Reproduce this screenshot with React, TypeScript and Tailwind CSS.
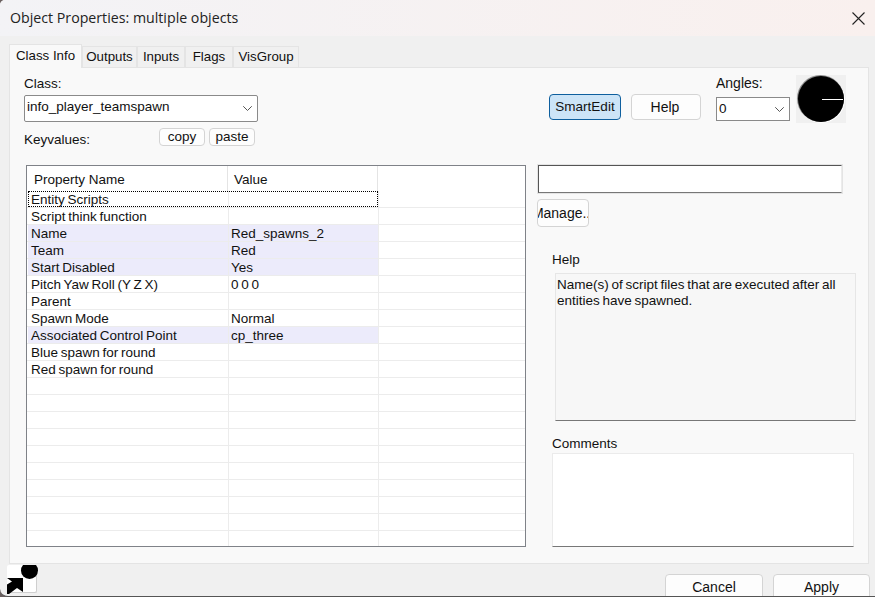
import React from "react";

const rows: [string, string, boolean][] = [
  ["Entity Scripts", "", false],
  ["Script think function", "", false],
  ["Name", "Red_spawns_2", true],
  ["Team", "Red", true],
  ["Start Disabled", "Yes", true],
  ["Pitch Yaw Roll (Y Z X)", "0 0 0", false],
  ["Parent", "", false],
  ["Spawn Mode", "Normal", false],
  ["Associated Control Point", "cp_three", true],
  ["Blue spawn for round", "", false],
  ["Red spawn for round", "", false],
  ...Array.from({ length: 10 }, (): [string, string, boolean] => ["", "", false]),
];

function Chevron() {
  return (
    <svg width="9" height="5" viewBox="0 0 9 5" fill="none" stroke="#555" strokeWidth="1">
      <path d="M0.25 0.25 L4.5 4.5 L8.75 0.25" />
    </svg>
  );
}

function Tab({ label, w }: { label: string; w: string }) {
  return (
    <div className={`${w} h-[21px] bg-[#f0f0f0] border border-b-0 border-[#e4e4e4] flex items-center justify-center text-[13.3px] text-[#111]`}>
      {label}
    </div>
  );
}

function Btn({ label, cls }: { label: string; cls: string }) {
  return (
    <div className={`${cls} flex items-center justify-center rounded-[4px] border border-[#d4d4d4] bg-[#fdfdfd] text-[#111] overflow-hidden whitespace-nowrap`}>
      {label}
    </div>
  );
}

export default function App() {
  return (
    <div className="w-[875px] h-[597px] bg-[#6a6060] overflow-hidden">
      <div className="w-full h-full rounded-tl-[5px] rounded-bl-[8px] bg-[#f0f0f0] flex flex-col overflow-hidden border-b border-[#555] font-['Liberation_Sans',Arial,sans-serif] text-[13.5px] text-[#111]">
        <div className="h-9 shrink-0 flex items-center justify-between pl-[10px] pr-[10px] bg-gradient-to-r from-[#f3f3f6] to-[#f9f0ee]">
          <span className="font-['Open_Sans',sans-serif] text-[14.2px] text-[#222]">Object Properties: multiple objects</span>
          <svg width="13" height="13" viewBox="0 0 13 13" stroke="#222" strokeWidth="1.1" fill="none">
            <path d="M0.5 0.5 L12.5 12.5 M12.5 0.5 L0.5 12.5" />
          </svg>
        </div>

        <div className="flex-1 pl-[9px] pr-[5px] pt-2 flex flex-col">
          <div className="flex items-end h-[23px]">
            <div className="w-[73px] h-[24px] -mb-px z-10 bg-[#f9f9f9] border border-b-0 border-[#e4e4e4] flex items-center justify-center pb-[2px] text-[13.3px]">
              Class Info
            </div>
            <Tab label="Outputs" w="w-[55px]" />
            <Tab label="Inputs" w="w-[48px]" />
            <Tab label="Flags" w="w-[48px]" />
            <Tab label="VisGroup" w="w-[66px]" />
          </div>

          <div className="h-[497px] w-[860px] bg-[#f9f9f9] border border-[#e4e4e4] flex flex-col">
            <div className="h-[97px] shrink-0 flex pl-[14px]">
              <div className="w-[234px] flex flex-col">
                <div className="h-[27px] pt-[8px] leading-[16px]">Class:</div>
                <div className="h-[27px] bg-white border border-[#8a8a8a] rounded-[2px] flex items-center justify-between pl-[2px] pr-[5px]">
                  <span className="-mt-[2px]">info_player_teamspawn</span>
                  <Chevron />
                </div>
                <div className="flex items-start mt-[6px] h-[20px]">
                  <span className="w-[135px] pt-[4px] leading-[16px]">Keyvalues:</span>
                  <Btn label="copy" cls="w-[46px] h-[18px] mr-1" />
                  <Btn label="paste" cls="w-[46px] h-[18px]" />
                </div>
              </div>
              <div className="ml-[291px] mt-[26px] flex items-start">
                <div className="w-[72px] h-[26px] flex items-center justify-center rounded-[4px] border border-[#0e5f9e] bg-[#cce4f7]">
                  SmartEdit
                </div>
                <Btn label="Help" cls="w-[70px] h-[26px] ml-[10px] pr-[2px] text-[14px]" />
              </div>
              <div className="ml-[15px] w-[74px] flex flex-col">
                <div className="h-[29px] pt-[7px] leading-[16px] text-[14px]">Angles:</div>
                <div className="h-[24px] bg-white border border-[#8a8a8a] flex items-center justify-between pl-[2px] pr-[5px]">
                  <span>0</span>
                  <Chevron />
                </div>
              </div>
              <div className="ml-[6px] mt-[7px] w-[50px] h-[48px] bg-[#f0f0f0]">
                <svg width="50" height="48" viewBox="0 0 50 48">
                  <circle cx="25.5" cy="24.5" r="23.5" fill="#fff" />
                  <circle cx="24.5" cy="23.5" r="23.5" fill="#8c8c8c" />
                  <circle cx="25" cy="24" r="23" fill="#000" />
                  <path d="M26 24.5 H47" stroke="#fff" strokeWidth="1" />
                </svg>
              </div>
            </div>

            <div className="flex flex-1 pl-[16px]">
              <div className="w-[500px] h-[382px] border border-[#7f8288] bg-white flex flex-col overflow-hidden">
                <div className="h-[25px] shrink-0 flex">
                  <div className="w-[201px] pl-[7px] pt-[6px] leading-[16px] border-r border-[#e4e4e4]">Property Name</div>
                  <div className="w-[150px] pl-[6px] pt-[6px] leading-[16px] border-r border-[#e4e4e4]">Value</div>
                </div>
                {rows.map(([k, v, hl], i) => (
                  <div key={i} className="h-[17px] shrink-0 flex relative border-b border-[#ececec] leading-[18px] [word-spacing:-1px]">
                    <div className={`w-[201px] ml-px pl-[3px] border-r border-[#ececec] ${hl ? "bg-[#ecebfb]" : ""}`}>{k}</div>
                    <div className={`w-[150px] pl-[2px] border-r border-[#ececec] ${hl ? "bg-[#ecebfb]" : ""}`}>{v}</div>
                    {i === 0 && (
                      <div className="absolute left-px top-0 w-[350px] h-[16px] border border-dotted border-black" />
                    )}
                  </div>
                ))}
              </div>

              <div className="ml-[11px] flex flex-col">
                <div className="ml-px w-[304px] h-[28px] bg-white border border-[#ececec] border-t-[#555] border-l-[#555] border-b-[#777] outline outline-1 outline-[#e4e4e4]" />
                <div className="mt-[6px] w-[52px] h-[28px] flex items-center justify-center rounded-[4px] border border-[#d4d4d4] bg-[#fdfdfd] overflow-hidden whitespace-nowrap text-[14px]">
                  <span>Manage...</span>
                </div>
                <div className="ml-[15px] mt-[25px] leading-[16px]">Help</div>
                <div className="ml-[18px] mt-[5px] w-[301px] h-[148px] bg-[#f7f7f7] border border-[#e6e6e6] border-b-[#777] px-[1px] pt-[3px] leading-[16px] [word-spacing:-1px]">
                  Name(s) of script files that are executed after all entities have spawned.
                </div>
                <div className="ml-[15px] mt-[15px] leading-[16px]">Comments</div>
                <div className="ml-[15px] mt-[1px] w-[302px] h-[94px] bg-white border border-[#ebebeb] border-b-[#777]" />
              </div>
            </div>
          </div>

          <div className="relative flex-1 flex justify-end items-start pt-[10px]">
            <div className="absolute left-[-2px] top-[1px] w-[30px] h-[28px] bg-white rounded-[2px] border-r border-b border-[#cfcfcf]">
              <svg width="34" height="32" viewBox="7 565 34 32" className="absolute left-0 top-0">
                <circle cx="29.5" cy="570.5" r="8.5" fill="#000" />
                <path d="M7 578 H23 V592 L17 588 L9 594 H6 V585 L12 581.5 Z" fill="#000" />
              </svg>
            </div>
            <div className="flex gap-[10px] h-[23px] overflow-hidden">
              <Btn label="Cancel" cls="w-[98px] h-[30px] pb-[4px] text-[14px]" />
              <Btn label="Apply" cls="w-[97px] h-[30px] pb-[4px] text-[14px]" />
            </div>
          </div>
        </div>
      </div>
    </div>
  );
}
